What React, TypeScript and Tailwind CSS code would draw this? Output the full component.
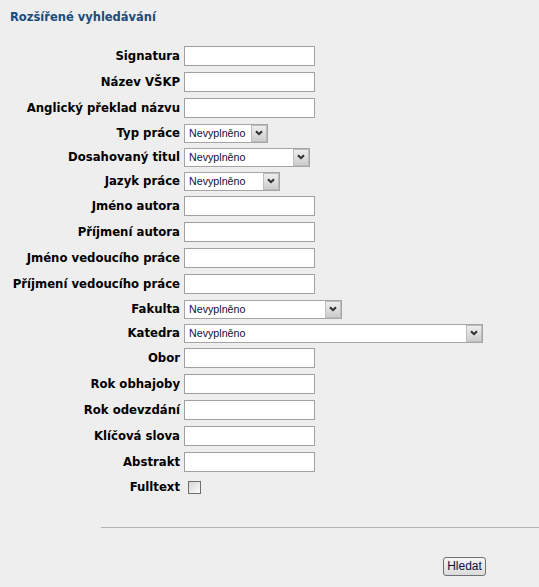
import React from 'react';

type Field =
  | { label: string; kind: 'text' }
  | { label: string; kind: 'select'; width: string }
  | { label: string; kind: 'check' };

const fields: Field[] = [
  { label: 'Signatura', kind: 'text' },
  { label: 'Název VŠKP', kind: 'text' },
  { label: 'Anglický překlad názvu', kind: 'text' },
  { label: 'Typ práce', kind: 'select', width: 'w-[84px]' },
  { label: 'Dosahovaný titul', kind: 'select', width: 'w-[126px]' },
  { label: 'Jazyk práce', kind: 'select', width: 'w-[96px]' },
  { label: 'Jméno autora', kind: 'text' },
  { label: 'Příjmení autora', kind: 'text' },
  { label: 'Jméno vedoucího práce', kind: 'text' },
  { label: 'Příjmení vedoucího práce', kind: 'text' },
  { label: 'Fakulta', kind: 'select', width: 'w-[158px]' },
  { label: 'Katedra', kind: 'select', width: 'w-[299px]' },
  { label: 'Obor', kind: 'text' },
  { label: 'Rok obhajoby', kind: 'text' },
  { label: 'Rok odevzdání', kind: 'text' },
  { label: 'Klíčová slova', kind: 'text' },
  { label: 'Abstrakt', kind: 'text' },
  { label: 'Fulltext', kind: 'check' },
];

const Select: React.FC<{ width: string }> = ({ width }) => (
  <div className={`relative flex h-[19px] ${width} items-center border border-[#a5a5a5] bg-white`}>
    <span className="pl-[4px] text-[10.7px] leading-[17px] text-[#10103a] [font-family:'Liberation_Sans',Arial,sans-serif]">
      Nevyplněno
    </span>
    {/* dropdown button */}
    <span className="absolute right-0 top-0 bottom-0 flex w-[16px] items-center justify-center border border-[#bdbdbd] bg-gradient-to-b from-[#eeeeee] to-[#cdcdcd]">
      <svg width="8" height="6" viewBox="0 0 8 6">
        <path d="M1 1.2 L4 4.2 L7 1.2" fill="none" stroke="#2e2e2e" strokeWidth="2" />
      </svg>
    </span>
  </div>
);

export default function App() {
  return (
    <div className="min-h-screen bg-[#eeeeee] pl-[10px] pt-[9px] text-black [font-family:'DejaVu_Sans',Verdana,sans-serif]">
      <h1 className="text-[11.5px] font-bold leading-[16px] text-[#1b4a7a]">Rozšířené vyhledávání</h1>

      <div className="mt-[18px] grid grid-cols-[170px_auto] gap-x-[4px]">
        {fields.map((f) => (
          <React.Fragment key={f.label}>
            <div
              className={`flex items-center justify-end pt-[1px] text-[11.7px] font-bold ${
                f.kind === 'text' ? 'h-[26px]' : f.kind === 'select' ? 'h-[24px]' : 'h-[25px]'
              }`}
            >
              {f.label}
            </div>
            <div className="flex items-center">
              {f.kind === 'text' && (
                <input
                  type="text"
                  className="h-[20px] w-[131px] border border-[#a0a0a0] bg-white px-[2px] text-[11px] outline-none"
                />
              )}
              {f.kind === 'select' && <Select width={f.width} />}
              {f.kind === 'check' && (
                <input
                  type="checkbox"
                  className="ml-[4px] h-[13px] w-[13px] appearance-none border border-[#6e6e6e] bg-gradient-to-br from-[#d6d6d6] to-[#fbfbfb]"
                />
              )}
            </div>
          </React.Fragment>
        ))}
      </div>

      <div className="ml-[91px] mt-[27px] border-t border-[#b4b4b4]" />

      <div className="ml-[433px] mt-[29px] flex">
        <button className="h-[19px] w-[43px] rounded-[3px] border border-[#707070] bg-gradient-to-b from-[#f6f6f6] to-[#dcdcdc] text-[12px] leading-[15px] text-[#10103a] [font-family:'Liberation_Sans',Arial,sans-serif]">
          Hledat
        </button>
      </div>
    </div>
  );
}
